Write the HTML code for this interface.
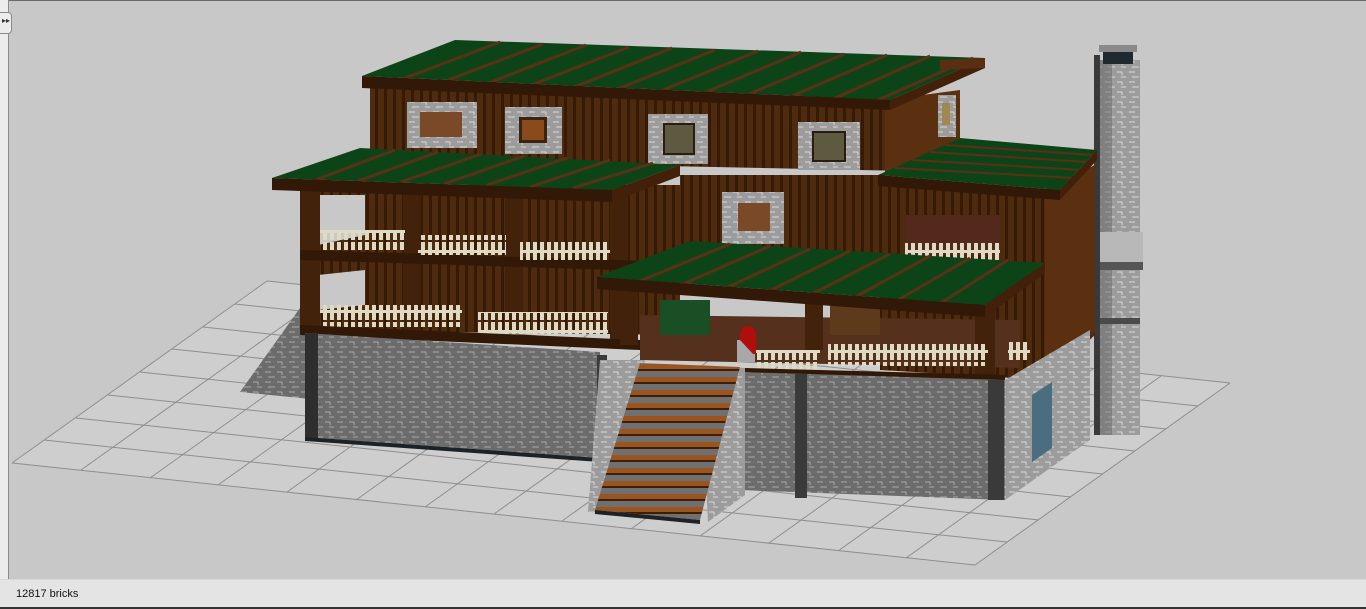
<!DOCTYPE html>
<html><head><meta charset="utf-8"><style>
html,body{margin:0;padding:0;width:1366px;height:609px;overflow:hidden;background:#c8c8c8;font-family:"Liberation Sans",sans-serif}
#left{position:absolute;left:0;top:0;width:8px;height:579px;background:#ececec;border-right:1px solid #8a8a8a}
#notch{position:absolute;left:0;top:12px;width:11px;height:20px;background:#ececec;border:1px solid #8a8a8a;border-left:none;border-radius:0 4px 4px 0}
#top{position:absolute;left:0;top:0;width:1366px;height:1px;background:#6a6a6a}
#status{position:absolute;left:0;top:579px;width:1366px;height:27px;background:#e4e4e4;border-top:1px solid #d8d8d8;border-bottom:2px solid #333}
#status span{position:absolute;left:16px;top:8px;font-size:11px;color:#111}
svg{position:absolute;left:0;top:0}
</style></head><body>
<svg width="1366" height="579" viewBox="0 0 1366 579">
<defs>
<pattern id="brick" width="24" height="10" patternUnits="userSpaceOnUse">
<rect width="24" height="10" fill="#6c6c6c"/>
<path d="M1 2h6M13 2h5v3M4 7h7M17 7h5" stroke="#a9a9a9" stroke-width="1" fill="none"/>
</pattern>
<pattern id="brickL" width="24" height="10" patternUnits="userSpaceOnUse">
<rect width="24" height="10" fill="#9c9c9c"/>
<path d="M1 2h6M13 2h5v3M4 7h7M17 7h5" stroke="#d8d8d8" stroke-width="1" fill="none"/>
</pattern>
<pattern id="wood" width="9" height="20" patternUnits="userSpaceOnUse">
<rect width="9" height="20" fill="#4e2a0e"/>
<rect x="6" width="3" height="20" fill="#361a06"/>
</pattern>
<pattern id="fence" width="7" height="20" patternUnits="userSpaceOnUse">
<rect x="1" y="2" width="4" height="18" fill="#dedac4"/>
<rect x="0" y="10" width="7" height="3" fill="#dedac4"/>
</pattern>
<pattern id="step" width="10" height="13" patternUnits="userSpaceOnUse">
<rect width="10" height="13" fill="#707070"/>
<rect width="10" height="5" fill="#9a5420"/>
<rect y="5" width="10" height="2" fill="#3e1e08"/>
</pattern>
</defs>
<g stroke="#8e8e8e" stroke-width="1">
<polygon points="12,463 975,565 1230,383 267,281" fill="#cecece" stroke="none"/>
<line x1="12" y1="463" x2="267" y2="281"/><line x1="81" y1="470" x2="336" y2="288"/><line x1="150" y1="478" x2="405" y2="296"/><line x1="218" y1="485" x2="473" y2="303"/><line x1="287" y1="492" x2="542" y2="310"/><line x1="356" y1="500" x2="611" y2="318"/><line x1="425" y1="507" x2="680" y2="325"/><line x1="494" y1="514" x2="749" y2="332"/><line x1="562" y1="521" x2="817" y2="339"/><line x1="631" y1="529" x2="886" y2="347"/><line x1="700" y1="536" x2="955" y2="354"/><line x1="769" y1="543" x2="1024" y2="361"/><line x1="838" y1="551" x2="1093" y2="369"/><line x1="906" y1="558" x2="1161" y2="376"/><line x1="975" y1="565" x2="1230" y2="383"/>
<line x1="12" y1="463" x2="975" y2="565"/><line x1="44" y1="440" x2="1007" y2="542"/><line x1="76" y1="418" x2="1039" y2="520"/><line x1="108" y1="395" x2="1071" y2="497"/><line x1="140" y1="372" x2="1103" y2="474"/><line x1="172" y1="349" x2="1135" y2="451"/><line x1="203" y1="327" x2="1166" y2="429"/><line x1="235" y1="304" x2="1198" y2="406"/><line x1="267" y1="281" x2="1230" y2="383"/>
</g>
<polygon points="240,392 300,308 320,300 320,400" fill="url(#brick)"/>
<!-- chimney -->
<rect x="1098" y="60" width="42" height="375" fill="url(#brickL)"/>
<rect x="1098" y="60" width="14" height="375" fill="#6a6a6a" opacity=".55"/>
<rect x="1093" y="232" width="50" height="35" fill="#b8b8b8"/>
<rect x="1093" y="262" width="50" height="8" fill="#555"/>
<rect x="1098" y="318" width="42" height="6" fill="#4a4a4a"/>
<rect x="1099" y="45" width="38" height="7" fill="#8a8a8a"/>
<rect x="1103" y="52" width="30" height="12" fill="#1e2a30"/>
<rect x="1094" y="55" width="6" height="380" fill="#3a3a3a"/>
<!-- upper house body -->
<polygon points="370,85 960,100 960,172 370,160" fill="url(#wood)"/>
<rect x="407" y="102" width="70" height="46" fill="url(#brickL)"/>
<rect x="420" y="112" width="42" height="25" fill="#7a4a28"/>
<rect x="505" y="107" width="57" height="47" fill="url(#brickL)"/>
<rect x="519" y="117" width="28" height="26" fill="#3a2410"/><rect x="522" y="120" width="22" height="20" fill="#8a4a1c"/>
<rect x="648" y="114" width="60" height="50" fill="url(#brickL)"/>
<rect x="664" y="124" width="30" height="30" fill="#5e5a40" stroke="#2a1c10" stroke-width="2"/>
<rect x="798" y="122" width="62" height="48" fill="url(#brickL)"/>
<rect x="813" y="132" width="32" height="29" fill="#5e5a40" stroke="#2a1c10" stroke-width="2"/>
<polygon points="885,100 960,90 960,178 885,172" fill="#5a3010"/>
<rect x="938" y="95" width="18" height="42" fill="url(#brickL)"/><rect x="942" y="103" width="8" height="22" fill="#a08850"/>
<!-- upper roof -->
<polygon points="362,76 455,40 985,58 890,100" fill="#0c4418"/>
<g stroke="#5a3018" stroke-width="3">
<line x1="405" y1="78" x2="500" y2="42"/><line x1="448" y1="80" x2="543" y2="44"/><line x1="491" y1="82" x2="586" y2="45"/><line x1="534" y1="84" x2="629" y2="47"/><line x1="577" y1="86" x2="672" y2="48"/><line x1="620" y1="88" x2="715" y2="50"/><line x1="663" y1="90" x2="758" y2="51"/><line x1="706" y1="92" x2="801" y2="52"/><line x1="749" y1="94" x2="844" y2="54"/><line x1="792" y1="96" x2="887" y2="55"/><line x1="835" y1="98" x2="930" y2="56"/><line x1="878" y1="100" x2="973" y2="58"/>
</g>
<polygon points="362,76 890,100 890,110 362,88" fill="#321806"/>
<polygon points="890,100 985,58 985,68 890,110" fill="#42200a"/>
<polygon points="940,60 985,58 985,68 940,70" fill="#5a2e12"/>
<!-- left middle balcony block -->
<polygon points="300,185 680,185 680,335 300,330" fill="url(#wood)"/>
<polygon points="318,195 365,195 365,235 318,245" fill="#c8c8c8"/>
<polygon points="318,275 365,270 365,305 318,310" fill="#c8c8c8"/>
<rect x="300" y="185" width="20" height="145" fill="#42220a"/>
<rect x="403" y="185" width="18" height="145" fill="#42220a"/>
<rect x="505" y="190" width="18" height="140" fill="#42220a"/>
<rect x="610" y="190" width="18" height="150" fill="#42220a"/>
<polygon points="300,250 680,262 680,272 300,260" fill="#321806"/>
<rect x="320" y="230" width="85" height="20" fill="url(#fence)"/>
<rect x="418" y="235" width="88" height="20" fill="url(#fence)"/>
<rect x="520" y="240" width="90" height="20" fill="url(#fence)"/>
<rect x="320" y="305" width="142" height="22" fill="url(#fence)"/>
<rect x="478" y="312" width="130" height="22" fill="url(#fence)"/>
<polygon points="300,325 640,340 640,350 300,335" fill="#321806"/>
<rect x="680" y="175" width="205" height="100" fill="url(#wood)"/>
<rect x="722" y="192" width="62" height="52" fill="url(#brickL)"/>
<rect x="738" y="203" width="32" height="28" fill="#7a4a28"/>
<!-- left middle roof -->
<polygon points="272,178 360,148 680,165 612,190" fill="#0c4418"/>
<g stroke="#5a3018" stroke-width="3">
<line x1="315" y1="180" x2="395" y2="150"/><line x1="358" y1="181" x2="438" y2="152"/><line x1="401" y1="182" x2="481" y2="154"/><line x1="444" y1="184" x2="524" y2="156"/><line x1="487" y1="185" x2="567" y2="158"/><line x1="530" y1="187" x2="610" y2="160"/><line x1="573" y1="188" x2="653" y2="163"/>
</g>
<polygon points="272,178 612,190 612,202 272,190" fill="#321806"/>
<polygon points="612,190 680,165 680,176 612,202" fill="#42200a"/>
<!-- right block -->
<polygon points="880,185 1045,190 1095,165 1095,335 1045,380 880,370" fill="url(#wood)"/>
<polygon points="1045,190 1095,165 1095,330 1045,375" fill="#5a3010"/>
<polygon points="905,215 1000,215 1000,255 905,255" fill="#52291a"/>
<rect x="905" y="243" width="95" height="18" fill="url(#fence)"/>
<polygon points="878,175 960,138 1097,150 1060,190" fill="#0c4418"/>
<g stroke="#5a3018" stroke-width="2">
<line x1="895" y1="168" x2="1075" y2="178"/><line x1="912" y1="160" x2="1082" y2="170"/><line x1="930" y1="152" x2="1088" y2="162"/><line x1="945" y1="145" x2="1093" y2="155"/>
</g>
<polygon points="878,175 1060,190 1060,200 878,186" fill="#321806"/>
<polygon points="1060,190 1097,150 1097,160 1060,200" fill="#42200a"/>
<!-- deck -->
<polygon points="640,315 1020,320 1020,368 640,360" fill="#55301c"/>
<rect x="660" y="300" width="50" height="35" fill="#1a4e24"/>
<rect x="830" y="305" width="50" height="30" fill="#5e3a1c"/>
<rect x="620" y="290" width="18" height="55" fill="#42220a"/>
<rect x="805" y="300" width="18" height="50" fill="#42220a"/>
<rect x="975" y="305" width="20" height="70" fill="#42220a"/>
<!-- front roof -->
<polygon points="597,277 690,241 1045,263 985,305" fill="#0c4418"/>
<g stroke="#5a3018" stroke-width="3">
<line x1="640" y1="281" x2="730" y2="244"/><line x1="683" y1="284" x2="770" y2="246"/><line x1="726" y1="288" x2="810" y2="249"/><line x1="769" y1="291" x2="850" y2="251"/><line x1="812" y1="294" x2="890" y2="254"/><line x1="855" y1="297" x2="930" y2="256"/><line x1="898" y1="300" x2="970" y2="258"/><line x1="941" y1="303" x2="1008" y2="260"/>
</g>
<polygon points="597,277 985,305 985,317 597,289" fill="#321806"/>
<polygon points="985,305 1045,263 1045,273 985,317" fill="#42200a"/>
<rect x="828" y="344" width="160" height="22" fill="url(#fence)"/>
<rect x="755" y="350" width="65" height="20" fill="url(#fence)"/>
<rect x="1008" y="340" width="22" height="22" fill="url(#fence)"/>
<polygon points="745,368 1005,375 1005,385 745,378" fill="#321806"/>
<rect x="737" y="340" width="18" height="22" fill="#a8a8a8"/>
<path d="M740 340v-6a8 8 0 0 1 16 0v20h-3" fill="#b00d0d"/>
<!-- left stone base -->
<polygon points="305,333 600,352 600,458 305,437" fill="url(#brick)"/>
<polygon points="305,333 318,334 318,440 305,437" fill="#2e2e2e"/>
<polygon points="305,437 600,458 600,462 305,441" fill="#1c2226"/>
<rect x="597" y="355" width="10" height="105" fill="#3a3a3a"/>
<!-- right stone base -->
<polygon points="740,372 1005,380 1005,500 740,490" fill="url(#brick)"/>
<rect x="795" y="374" width="12" height="124" fill="#3a3a3a"/>
<rect x="988" y="380" width="16" height="120" fill="#3a3a3a"/>
<polygon points="1005,380 1090,330 1090,440 1005,500" fill="url(#brickL)"/>
<polygon points="1032,395 1052,382 1052,448 1032,462" fill="#4a6e80"/>
<!-- stairs -->
<polygon points="600,360 645,360 605,515 588,512" fill="url(#brickL)"/>
<polygon points="700,365 745,368 745,495 708,522" fill="url(#brickL)"/>
<polygon points="640,363 740,367 700,520 595,510" fill="url(#step)"/>
<polygon points="595,510 700,520 700,524 595,514" fill="#1c2226"/>
</svg>
<div id="top"></div>
<div id="left"></div>
<div id="notch"></div>
<div style="position:absolute;left:2px;top:16px;font-size:8px;color:#333">▸▸</div>
<div id="status"><span>12817 bricks</span></div>
</body></html>
